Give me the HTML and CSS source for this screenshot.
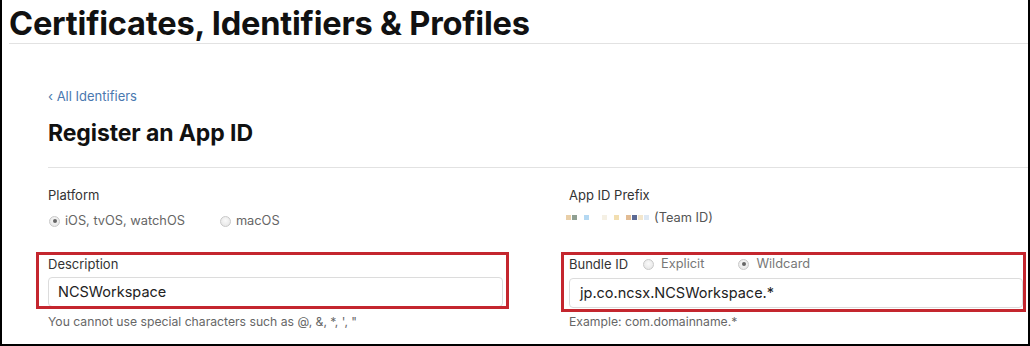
FILE: index.html
```html
<!DOCTYPE html>
<html>
<head>
<meta charset="utf-8">
<link rel="stylesheet" href="styles.css">
</head>
<body>
<div class="frame">
  <header class="top">
    <h1 class="title">Certificates, Identifiers &amp; Profiles</h1>
  </header>
  <main class="content">
    <a class="back">&lsaquo; All Identifiers</a>
    <h2 class="page-title">Register an App ID</h2>
    <div class="grid">
      <div class="col">
        <div class="label">Platform</div>
        <div class="radios">
          <span class="radio checked"></span><span class="rtext">iOS, tvOS, watchOS</span>
          <span class="radio macos"></span><span class="rtext">macOS</span>
        </div>
      </div>
      <div class="col">
        <div class="label">App ID Prefix</div>
        <div class="prefix">
          <span class="blur">
            <i style="background:#e9cfa8"></i><i style="background:#8f9f92"></i><i style="background:#fff"></i><i style="background:#b4d8f2"></i><i style="background:#fff"></i><i style="background:#fff"></i><i style="background:#f5f0e4"></i><i style="background:#fff"></i><i style="background:#f2deb0"></i><i style="background:#fff"></i><i style="background:#e2bc94"></i><i style="background:#5c6a94"></i><i style="background:#f3e6cc"></i><i style="background:#dde8f4"></i>
          </span>
          <span class="team">(Team ID)</span>
        </div>
      </div>
      <div class="col field desc">
        <div class="label">Description</div>
        <div class="input">NCSWorkspace</div>
        <div class="help">You cannot use special characters such as @, &amp;, *, ', "</div>
        <div class="mark mark-left"></div>
      </div>
      <div class="col field bundle">
        <div class="label-row">
          <span class="label inline">Bundle ID</span>
          <span class="radio"></span><span class="rtext gray">Explicit</span>
          <span class="radio checked wild"></span><span class="rtext gray">Wildcard</span>
        </div>
        <div class="input">jp.co.ncsx.NCSWorkspace.*</div>
        <div class="help">Example: com.domainname.*</div>
        <div class="mark mark-right"></div>
      </div>
    </div>
  </main>
</div>
</body>
</html>
```

FILE: styles.css
```css
* { box-sizing: border-box; }
html, body { margin: 0; padding: 0; background: #fff; }
body {
  width: 1030px;
  height: 346px;
  overflow: hidden;
  font-family: Inter, "Open Sans", "Liberation Sans", sans-serif;
  color: #1d1d1f;
}
.frame {
  width: 1030px;
  height: 346px;
  border-left: 2px solid #000;
  border-right: 2px solid #000;
  border-bottom: 2px solid #000;
  overflow: hidden;
}
.top {
  margin-left: 7px;
  border-bottom: 1px solid #e2e2e2;
  height: 44px;
}
.title {
  margin: 0;
  font-size: 32.6px;
  font-weight: 700;
  letter-spacing: -0.2px;
  line-height: 44px;
  color: #111;
  position: relative;
  top: 1px;
}
.content {
  padding-left: 46px;
}
.back {
  display: block;
  margin-top: 44px;
  font-size: 13px;
  line-height: 16px;
  color: #4a78b0;
}
.page-title {
  margin: 0;
  padding-top: 15px;
  height: 64px;
  font-size: 23px;
  line-height: 28px;
  font-weight: 700;
  letter-spacing: -0.1px;
  color: #111;
  border-bottom: 1px solid #e2e2e2;
}
.grid {
  display: grid;
  grid-template-columns: 455px 454px;
  column-gap: 66px;
  padding-top: 19px;
}
.col { position: relative; }
.label {
  font-size: 13px;
  line-height: 16px;
  color: #333;
}
.radios {
  display: flex;
  align-items: center;
  margin-top: 10px;
  height: 16px;
  padding-left: 1px;
}
.radio {
  display: inline-block;
  width: 11px;
  height: 11px;
  border-radius: 50%;
  border: 1px solid #c9c9c9;
  background: radial-gradient(circle at 50% 40%, #fafafa, #e2e2e2);
  position: relative;
  flex: none;
}
.radio.checked::after {
  content: "";
  position: absolute;
  left: 2.5px;
  top: 2.5px;
  width: 4px;
  height: 4px;
  border-radius: 50%;
  background: #666;
}
.rtext {
  font-size: 12.8px;
  color: #666;
  margin-left: 5px;
  line-height: 16px;
}
.radio.macos { margin-left: 35px; }
.prefix {
  display: flex;
  align-items: center;
  margin-top: 6px;
  height: 16px;
}
.blur { display: flex; margin-left: -3px; }
.blur i { display: block; width: 5px; height: 5px; margin-right: 1px; }
.team { font-size: 12.8px; color: #555; margin-left: 4px; }
.field { margin-top: 27px; }
.input {
  margin-top: 5px;
  height: 30px;
  border: 1px solid #dcdcdc;
  border-radius: 4px;
  padding-left: 9px;
  font-size: 14.5px;
  line-height: 28px;
  color: #222;
}
.bundle .input { margin-top: 6px; padding-left: 10px; }
.help {
  font-size: 12.2px;
  line-height: 16px;
  color: #666;
  margin-top: 7px;
}
.bundle .help { margin-top: 6px; }
.label-row {
  display: flex;
  align-items: center;
  height: 16px;
}
.label.inline { margin-right: 15px; }
.rtext.gray { margin-left: 7px; color: #777; }
.radio.wild { margin-left: 34px; }
.mark {
  position: absolute;
  border: 3px solid #c4262e;
  pointer-events: none;
}
.mark-left { left: -12px; right: -6px; top: -4px; bottom: 21px; }
.mark-right { left: -8px; right: -3px; top: -4px; bottom: 18px; }
```
